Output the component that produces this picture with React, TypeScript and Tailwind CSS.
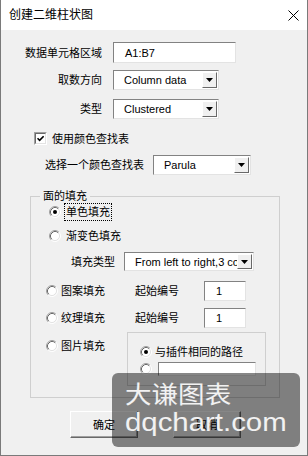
import React from 'react';

const sunken =
  'bg-white border border-t-[#828282] border-l-[#828282] border-r-[#e3e3e3] border-b-[#e3e3e3]';

function Field({ value, className }: { value?: string; className: string }) {
  return (
    <div className={`${sunken} flex items-center pl-[11px] text-[11px] leading-[14px] ${className}`}>
      {value}
    </div>
  );
}

function Combo({ value, className }: { value: string; className: string }) {
  return (
    <div className={`${sunken} flex items-stretch p-px ${className}`}>
      <span className="flex min-w-0 flex-1 items-center overflow-hidden whitespace-nowrap pl-[9px] text-[11px] leading-[14px]">
        {value}
      </span>
      <span className="flex w-[15px] shrink-0 items-center justify-center border border-t-white border-l-white border-r-[#696969] border-b-[#696969] bg-[#f0f0f0]">
        <svg width="7" height="4" viewBox="0 0 7 4">
          <path d="M0 0h7L3.5 4z" fill="#000" />
        </svg>
      </span>
    </div>
  );
}

function Radio({ on }: { on?: boolean }) {
  return (
    <svg width="12" height="12" viewBox="0 0 12 12" className="shrink-0">
      <circle cx="6" cy="6" r="4.5" fill="#fff" />
      <path d="M2.11 9.89A5.5 5.5 0 0 1 9.89 2.11" fill="none" stroke="#a0a0a0" />
      <path d="M9.89 2.11A5.5 5.5 0 0 1 2.11 9.89" fill="none" stroke="#ffffff" />
      <path d="M2.82 9.18A4.5 4.5 0 0 1 9.18 2.82" fill="none" stroke="#696969" />
      <path d="M9.18 2.82A4.5 4.5 0 0 1 2.82 9.18" fill="none" stroke="#e3e3e3" />
      {on && <circle cx="6" cy="6" r="2" fill="#000" />}
    </svg>
  );
}

function Check() {
  return (
    <div className="h-[13px] w-[13px] shrink-0 border border-t-[#a0a0a0] border-l-[#a0a0a0] border-r-white border-b-white">
      <div className="flex h-full w-full items-center justify-center border border-t-[#696969] border-l-[#696969] border-r-[#e3e3e3] border-b-[#e3e3e3] bg-white">
        <svg width="7" height="7" viewBox="0 0 7 7">
          <path d="M0.5 3.2 2.6 5.3 6.6 1.2" fill="none" stroke="#000" strokeWidth="1.6" />
        </svg>
      </div>
    </div>
  );
}

function Btn({ label }: { label: string }) {
  return (
    <div className="flex h-[27px] w-[68px] items-center justify-center border border-t-white border-l-white border-r-[#696969] border-b-[#696969] bg-[#f0f0f0] text-[11px] leading-[14px] shadow-[inset_-1px_-1px_0_#a0a0a0]">
      {label}
    </div>
  );
}

const lbl = 'text-[11px] leading-[14px] whitespace-nowrap';

export default function App() {
  return (
    <div className="flex h-[456px] w-[308px] flex-col border-x border-b border-[#7a7a7a] bg-[#f0f0f0] font-['Liberation_Sans','Noto_Sans_CJK_SC',sans-serif] text-black">
      {/* title bar */}
      <div className="flex h-[30px] shrink-0 items-center justify-between bg-white pl-[8px] pr-[8px]">
        <span className="text-[12px] leading-[16px]">创建二维柱状图</span>
        <svg width="11" height="11" viewBox="0 0 11 11">
          <path d="M0.5 0.5l10 10M10.5 0.5l-10 10" stroke="#000" strokeWidth="1" />
        </svg>
      </div>

      <div className="relative flex flex-1 flex-col">
        <div className="mt-[12px] flex h-[21px] items-center">
          <span className={`${lbl} w-[101px] text-right`}>数据单元格区域</span>
          <Field value="A1:B7" className="ml-[11px] h-[21px] w-[123px]" />
        </div>
        <div className="mt-[7px] flex h-[20px] items-center">
          <span className={`${lbl} w-[101px] text-right`}>取数方向</span>
          <Combo value="Column data" className="ml-[11px] h-[20px] w-[106px]" />
        </div>
        <div className="mt-[9px] flex h-[20px] items-center">
          <span className={`${lbl} w-[101px] text-right`}>类型</span>
          <Combo value="Clustered" className="ml-[11px] h-[20px] w-[106px]" />
        </div>
        <div className="mt-[13px] flex h-[13px] items-center gap-[5px] pl-[33px]">
          <Check />
          <span className={lbl}>使用颜色查找表</span>
        </div>
        <div className="mt-[10px] flex h-[20px] items-center pl-[44px]">
          <span className={`${lbl} w-[99px]`}>选择一个颜色查找表</span>
          <Combo value="Parula" className="ml-[9px] h-[20px] w-[98px]" />
        </div>

        {/* group box */}
        <fieldset className="ml-[29px] mt-[14px] h-[209px] w-[250px] border border-[#cfcfcf]">
          <legend className={`${lbl} ml-[9px] px-[3px]`}>面的填充</legend>
          <div className="flex h-[18px] items-center pl-[18px]">
            <Radio on />
            <span className={`${lbl} ml-[3px] border border-dotted border-black px-px py-[1px]`}>单色填充</span>
          </div>
          <div className="mt-[6px] flex h-[18px] items-center pl-[18px]">
            <Radio />
            <span className={`${lbl} ml-[5px]`}>渐变色填充</span>
          </div>
          <div className="mt-[7px] flex h-[19px] items-center pl-[40px]">
            <span className={`${lbl} w-[44px]`}>填充类型</span>
            <Combo value="From left to right,3 colors" className="ml-[9px] h-[19px] w-[130px]" />
          </div>
          <div className="mt-[10px] flex h-[20px] items-center pl-[15px]">
            <Radio />
            <span className={`${lbl} ml-[3px] w-[44px]`}>图案填充</span>
            <span className={`${lbl} ml-[30px] w-[44px]`}>起始编号</span>
            <Field value="1" className="ml-[25px] h-[20px] w-[42px]" />
          </div>
          <div className="mt-[7px] flex h-[20px] items-center pl-[15px]">
            <Radio />
            <span className={`${lbl} ml-[3px] w-[44px]`}>纹理填充</span>
            <span className={`${lbl} ml-[30px] w-[44px]`}>起始编号</span>
            <Field value="1" className="ml-[25px] h-[20px] w-[42px]" />
          </div>
          <div className="mt-[4px] flex items-start pl-[15px]">
            <div className="mt-[7px] flex h-[14px] items-center">
              <Radio />
              <span className={`${lbl} ml-[3px] w-[44px]`}>图片填充</span>
            </div>
            <div className="ml-[22px] h-[54px] w-[139px] border border-[#cfcfcf] pl-[12px] pt-[12px]">
              <div className="flex h-[14px] items-center">
                <Radio on />
                <span className={`${lbl} ml-[3px]`}>与插件相同的路径</span>
              </div>
              <div className="mt-[3px] flex h-[14px] items-center">
                <Radio />
                <Field className="ml-[6px] h-[14px] w-[98px]" />
              </div>
            </div>
          </div>
        </fieldset>

        <div className="mt-[13px] flex gap-[35px] pl-[69px]">
          <Btn label="确定" />
          <Btn label="取消" />
        </div>

        {/* watermark overlay */}
        <div className="absolute left-[111px] top-[343px] h-[74px] w-[188px] rounded-[6px] bg-[rgba(0,0,0,0.47)] pl-[13px] pt-[8px] text-white/90">
          <div className="origin-left scale-x-[1.13]">
            <div className="font-['Noto_Sans_CJK_SC',sans-serif] text-[23.5px] leading-[24px]">大谦图表</div>
            <div className="mt-[2px] font-['Liberation_Sans',sans-serif] text-[26px] leading-[30px]">dqchart.com</div>
          </div>
        </div>
      </div>
    </div>
  );
}
